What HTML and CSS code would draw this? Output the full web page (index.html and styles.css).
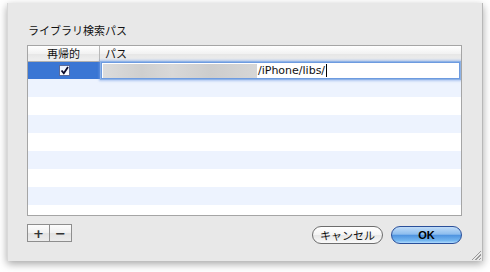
FILE: index.html
```html
<!DOCTYPE html>
<html>
<head>
<meta charset="utf-8">
<link rel="stylesheet" href="styles.css">
</head>
<body>
<div class="window">
  <div class="title">ライブラリ検索パス</div>
  <div class="table">
    <div class="thead">
      <div class="th c1">再帰的</div>
      <div class="th c2">パス</div>
    </div>
    <div class="row sel">
      <div class="cell c1"><span class="check"><svg width="9" height="9" viewBox="0 0 9 9"><path d="M1.5 4.5 L3.8 7.2 L8 1" fill="none" stroke="#0a0a2a" stroke-width="1.8"/></svg></span></div>
      <div class="cell c2 edit"><span class="blur"></span><span class="path">/iPhone/libs/</span><span class="caret"></span></div>
    </div>
    <div class="row alt"></div>
    <div class="row"></div>
    <div class="row alt"></div>
    <div class="row"></div>
    <div class="row alt"></div>
    <div class="row"></div>
    <div class="row alt"></div>
    <div class="row"></div>
  </div>
  <div class="footer">
    <div class="pm"><span class="pmb">+</span><span class="pmb">−</span></div>
    <div class="btns">
      <button class="btn cancel">キャンセル</button>
      <button class="btn ok">OK</button>
    </div>
  </div>
  <div class="grip"></div>
</div>
</body>
</html>
```
FILE: styles.css
```css
html, body { margin: 0; padding: 0; }
body {
  background: #ffffff;
  width: 490px; height: 272px; overflow: hidden;
  font-family: "Noto Sans CJK JP", "Liberation Sans", sans-serif;
  color: #111;
}
.window {
  position: relative;
  box-sizing: border-box;
  margin: 3px 0 0 7px;
  width: 476px; height: 258px;
  background: #e8e8e8;
  border-right: 1px solid #b8b8b8;
  border-left: 1px solid #d8d8d8;
  box-shadow: 0 3px 8px rgba(0,0,0,0.35);
  padding: 19px 20px 0 19px;
  display: flex; flex-direction: column;
}
.title {
  font-size: 11px; line-height: 16px; height: 16px;
  margin-left: 1px;
  margin-bottom: 7px;
}
.table {
  box-sizing: border-box;
  width: 435px; height: 171px;
  border: 1px solid #a5a5a5;
  background: #fff;
  overflow: hidden;
}
.thead {
  display: flex; height: 15px;
  border-bottom: 1px solid #b0b0b0;
  background: linear-gradient(#ffffff, #f2f2f2 50%, #e6e6e6 51%, #efefef);
  font-size: 11px; line-height: 15px;
}
.c1 { width: 72px; flex: none; box-sizing: border-box; }
.c2 { flex: 1; }
.th.c1 { text-align: center; border-right: 1px solid #b8b8b8; }
.th.c2 { padding-left: 5px; }
.row { height: 18px; display: flex; }
.row.alt { background: #edf3fe; }
.row.sel { height: 17px; }
.row.sel .c1 { background: #3a76d4; display: flex; justify-content: center; align-items: center; }
.check {
  width: 9px; height: 9px; border: 1px solid #5a6a9a;
  background: linear-gradient(#e8f0ff, #ffffff);
  display: flex; align-items: center; justify-content: center;
  margin-left: 1px;
}
.check svg { display: block; }
.edit {
  position: relative;
  margin-left: 1px; margin-right: 1px;
  background: #fff;
  box-shadow: 0 0 0 1px #8fb3e6, inset 0 0 0 1px #6d9be0, 0 0 2px 2px rgba(120,160,230,0.55);
  display: flex; align-items: center;
  font-family: "DejaVu Sans", sans-serif;
  font-size: 11px; line-height: 17px;
}
.blur {
  width: 154px; height: 14px; margin-left: 2px;
  background: linear-gradient(90deg, #dcdcdc, #cfcfcf 25%, #d8d8d8 45%, #cdcdcd 70%, #d6d6d6);
  filter: blur(0.6px);
}
.path { margin-left: 1px; color: #111; }
.caret { width: 1px; height: 13px; background: #000; margin-left: 1px; }
.footer {
  display: flex; justify-content: space-between; align-items: flex-start;
  margin-top: 8px; width: 435px;
}
.pm { display: flex; height: 18px; border: 1px solid #8e8e8e; box-sizing: border-box; }
.pmb {
  width: 21px; height: 16px; display: flex; align-items: center; justify-content: center;
  background: linear-gradient(#fdfdfd, #f0f0f0 50%, #e2e2e2 51%, #ececec);
  font-family: "DejaVu Sans", sans-serif; font-weight: bold; font-size: 13px; color: #333;
}
.pmb + .pmb { border-left: 1px solid #8e8e8e; }
.btns { display: flex; gap: 8px; margin-top: 2px; }
.btn {
  height: 18px; width: 71px; border-radius: 9px; padding: 0;
  font-family: "Noto Sans CJK JP", sans-serif; font-size: 11px; line-height: 16px;
  box-sizing: border-box;
}
.cancel {
  border: 1px solid #6d6d6d;
  background: linear-gradient(#ffffff, #f4f4f4 50%, #e6e6e6 51%, #fafafa);
  color: #111;
}
.ok {
  border: 1px solid #2a4f9a;
  background: linear-gradient(#c0dcf8, #8dbdee 45%, #4f94e0 52%, #74b6f0 85%, #b0dcff);
  color: #000; font-family: "Liberation Sans", sans-serif; font-weight: bold; font-size: 11px;
}
.grip {
  position: absolute; right: 1px; bottom: 1px; width: 9px; height: 9px;
  background: linear-gradient(135deg, transparent 45%, #9a9a9a 45%, #9a9a9a 52%, transparent 52%, transparent 66%, #9a9a9a 66%, #9a9a9a 73%, transparent 73%, transparent 86%, #9a9a9a 86%, #9a9a9a 93%, transparent 93%);
}
```
